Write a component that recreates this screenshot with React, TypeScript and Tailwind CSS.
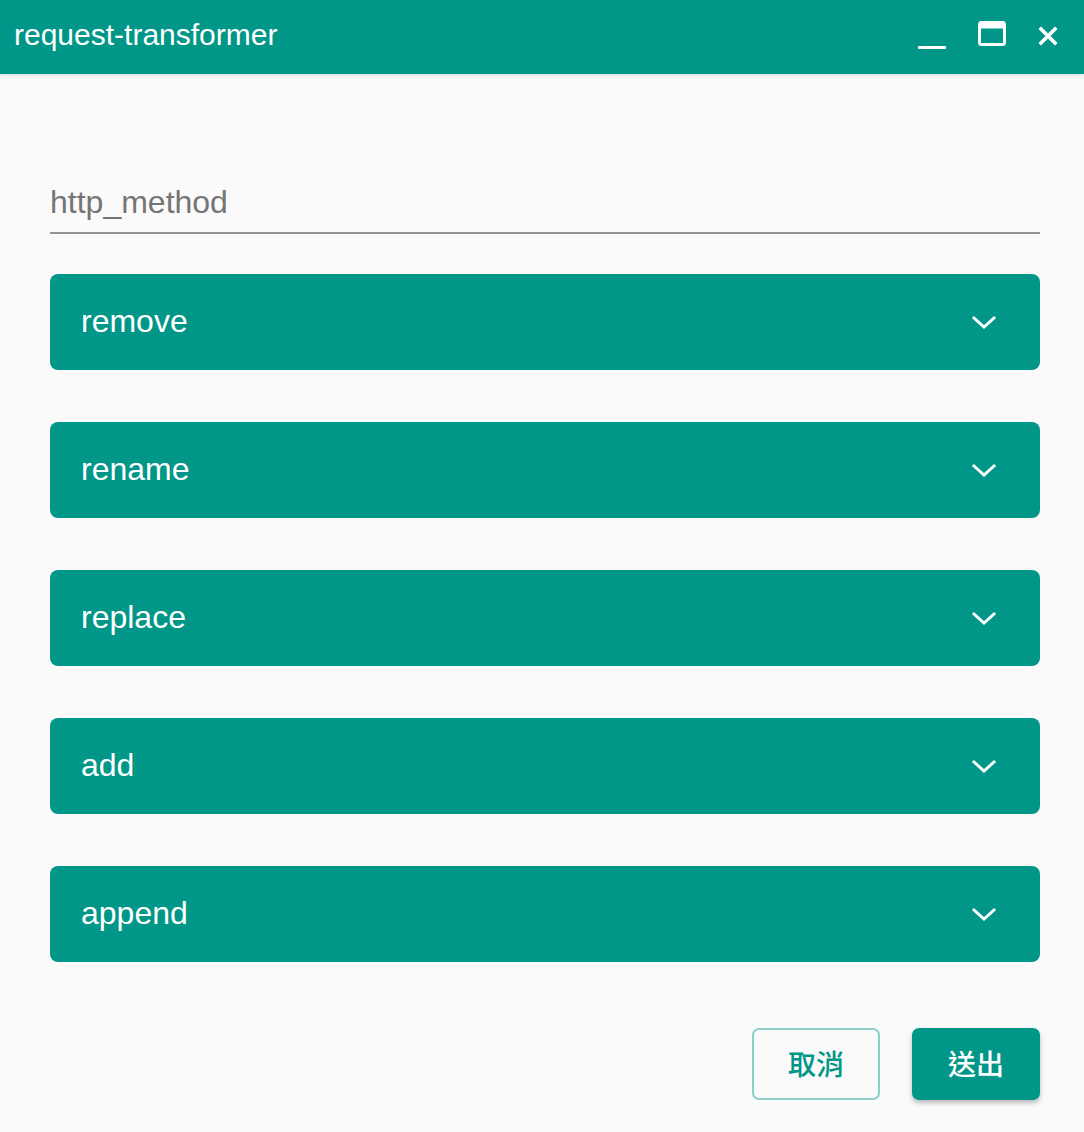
import React from "react";

const Chevron = () => (
  <svg width="26" height="26" viewBox="0 0 26 26" fill="none" stroke="white" strokeWidth="3" strokeLinecap="square">
    <path d="M3 9 L13 18 L23 9" />
  </svg>
);

const sections = ["remove", "rename", "replace", "add", "append"];

export default function App() {
  return (
    <div className="w-[1084px] h-[1132px] bg-[#fafafa] flex flex-col" style={{ fontFamily: '"Liberation Sans", Arial, "Noto Sans CJK TC", sans-serif' }}>
      <div className="h-[74px] bg-[#009688] flex items-center pl-[14px] pr-[26px] shadow-[0_1px_3px_rgba(0,0,0,0.15)]">
        <div className="text-white text-[30px] flex-1 pb-[6px]">request-transformer</div>
        <div className="flex items-center">
          <svg width="28" height="28" viewBox="0 0 28 28" className="mt-[2px]">
            <rect x="0" y="22" width="28" height="3" rx="1" fill="white" />
          </svg>
          <svg width="28" height="28" viewBox="0 0 28 28" className="ml-[32px] mt-[-4px]">
            <rect x="1.5" y="1.5" width="25" height="22" rx="2" fill="none" stroke="white" strokeWidth="3" />
            <rect x="1.5" y="1.5" width="25" height="6" fill="white" />
          </svg>
          <svg width="20" height="20" viewBox="0 0 20 20" stroke="white" strokeWidth="3.6" strokeLinecap="square" className="ml-[32px] mt-[-2px]">
            <path d="M3 3 L17 17 M17 3 L3 17" />
          </svg>
        </div>
      </div>
      <div className="pl-[50px] pr-[44px] pt-[108px] flex flex-col">
        <div className="border-b-2 border-[#949494] h-[52px] flex items-start">
          <span className="text-[32px] text-[#757575] leading-[40px]">http_method</span>
        </div>
        <div className="flex flex-col gap-[52px] mt-[40px]">
          {sections.map((s) => (
            <div key={s} className="h-[96px] rounded-[8px] bg-[#009688] flex items-center pl-[31px] pr-[43px]">
              <span className="flex-1 text-white text-[32px] pb-[2px]">{s}</span>
              <Chevron />
            </div>
          ))}
        </div>
        <div className="flex justify-end gap-[32px] mt-[66px]">
          <button className="w-[128px] h-[72px] pt-[4px] rounded-[7px] border-2 border-[#8ccfc8] text-[#009688] text-[28px] font-medium bg-transparent">取消</button>
          <button className="w-[128px] h-[72px] pt-[4px] rounded-[7px] bg-[#009688] text-white text-[28px] font-medium shadow-[0_3px_5px_rgba(0,0,0,0.25)]">送出</button>
        </div>
      </div>
    </div>
  );
}
